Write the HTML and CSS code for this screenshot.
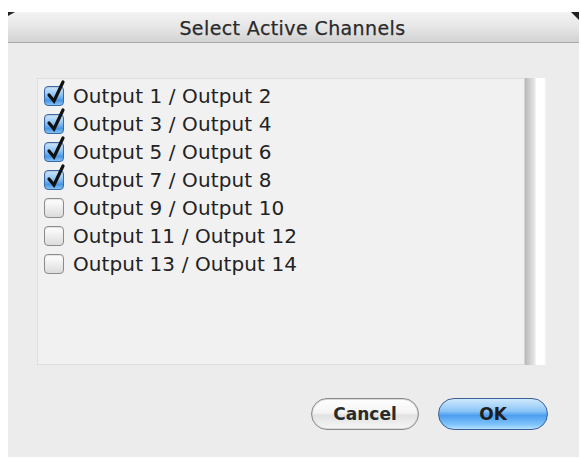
FILE: index.html
```html
<!DOCTYPE html>
<html>
<head>
<meta charset="utf-8">
<title>Select Active Channels</title>
<link rel="stylesheet" href="styles.css">
</head>
<body>
<div class="window">
  <div class="titlebar">
    <span class="corner corner-left"></span>
    <span class="title">Select Active Channels</span>
    <span class="corner corner-right"></span>
  </div>
  <div class="content">
    <div class="listwrap">
      <div class="list">
        <div class="row"><span class="cb checked"><svg viewBox="0 0 22 26" class="tick"><path d="M4 15 L9 21 L18 2" /></svg></span><span class="label">Output 1 / Output 2</span></div>
        <div class="row"><span class="cb checked"><svg viewBox="0 0 22 26" class="tick"><path d="M4 15 L9 21 L18 2" /></svg></span><span class="label">Output 3 / Output 4</span></div>
        <div class="row"><span class="cb checked"><svg viewBox="0 0 22 26" class="tick"><path d="M4 15 L9 21 L18 2" /></svg></span><span class="label">Output 5 / Output 6</span></div>
        <div class="row"><span class="cb checked"><svg viewBox="0 0 22 26" class="tick"><path d="M4 15 L9 21 L18 2" /></svg></span><span class="label">Output 7 / Output 8</span></div>
        <div class="row"><span class="cb"></span><span class="label">Output 9 / Output 10</span></div>
        <div class="row"><span class="cb"></span><span class="label">Output 11 / Output 12</span></div>
        <div class="row"><span class="cb"></span><span class="label">Output 13 / Output 14</span></div>
      </div>
      <div class="scrolltrack"></div>
    </div>
    <div class="buttons">
      <button class="btn cancel">Cancel</button>
      <button class="btn ok">OK</button>
    </div>
  </div>
</div>
</body>
</html>
```

FILE: styles.css
```css
html, body {
  background: #ffffff;
}
body {
  margin: 12px 2px 0 8px;
  font-family: "DejaVu Sans", "Liberation Sans", sans-serif;
}
.window {
  width: 571px;
  height: 445px;
  background: #ececec;
  display: flex;
  flex-direction: column;
}
.titlebar {
  height: 30px;
  border-bottom: 1px solid #a9a9a9;
  background: linear-gradient(to bottom, #f3f3f3 0%, #e6e6e6 50%, #d2d2d2 100%);
  display: flex;
  align-items: center;
  justify-content: center;
  position: relative;
}
.title {
  font-size: 19px;
  color: #2a2a2a;
  letter-spacing: 0.4px;
  padding-top: 1px;
  padding-right: 2px;
  -webkit-text-stroke: 0.25px #2a2a2a;
}
.corner {
  position: absolute;
  top: 0;
  width: 0;
  height: 0;
  border-style: solid;
}
.corner-left {
  left: 0;
  border-width: 4px 7px 0 0;
  border-color: #222 transparent transparent transparent;
}
.corner-right {
  right: 0;
  border-width: 0 8px 8px 0;
  border-color: transparent #222 transparent transparent;
}
.content {
  flex: 1;
  display: flex;
  flex-direction: column;
  padding: 35px 33px 0 29px;
}
.listwrap {
  display: flex;
  height: 287px;
}
.list {
  flex: 1;
  background: #f1f1f1;
  border: 1px solid #dedede;
  border-right: 1px solid #d4d4d4;
  padding: 3px 0 0 6px;
  display: flex;
  flex-direction: column;
}
.row {
  height: 28px;
  display: flex;
  align-items: center;
  gap: 9px;
}
.cb {
  width: 18px;
  height: 18px;
  border: 1px solid #8c8c8c;
  border-radius: 4px;
  background: linear-gradient(to bottom, #ffffff 0%, #ececec 55%, #dcdcdc 100%);
  position: relative;
  flex: none;
  box-shadow: inset 0 1px 1px rgba(0,0,0,0.12);
}
.cb.checked {
  border-color: #3b69a6;
  background: linear-gradient(to bottom, #cfe6fb 0%, #8ec4f2 45%, #4a97e3 75%, #80c0f5 100%);
}
.tick {
  position: absolute;
  left: 0px;
  top: -7px;
  width: 22px;
  height: 26px;
  overflow: visible;
}
.tick path {
  fill: none;
  stroke: #111;
  stroke-width: 3.2;
  stroke-linecap: round;
  stroke-linejoin: miter;
}
.label {
  font-size: 20px;
  color: #222;
  letter-spacing: 0.1px;
}
.scrolltrack {
  width: 21px;
  background: linear-gradient(to right, #b9b9b9 0%, #d2d2d2 25%, #e6e6e6 45%, #ffffff 55%, #ffffff 90%, #f0f0f0 100%);
}
.buttons {
  display: flex;
  justify-content: flex-end;
  gap: 19px;
  margin-top: 33px;
  margin-right: -2px;
}
.btn {
  height: 32px;
  border-radius: 16px;
  font-family: "DejaVu Sans", "Liberation Sans", sans-serif;
  font-size: 17px;
  font-weight: bold;
  color: #2b2b2b;
  padding: 0;
}
.cancel {
  width: 108px;
  border: 1px solid #8a8a8a;
  background: linear-gradient(to bottom, #ffffff 0%, #f4f4f4 45%, #e2e2e2 55%, #f6f6f6 100%);
  box-shadow: inset 0 0 0 1px #d8d8d8;
}
.ok {
  width: 110px;
  border: 1px solid #3d5f99;
  background: linear-gradient(to bottom, #cfe8fd 0%, #8cc6f6 40%, #4d9ef0 55%, #7ec4fb 85%, #b6e0ff 100%);
  color: #1f1f1f;
}
```
